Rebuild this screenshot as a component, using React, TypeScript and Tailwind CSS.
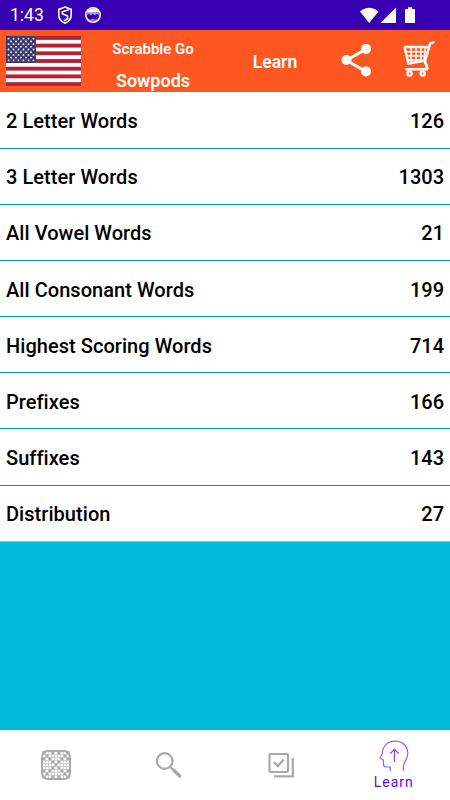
interface WordList {
  label: string;
  count: number;
}

const WORD_LISTS: WordList[] = [
  { label: '2 Letter Words', count: 126 },
  { label: '3 Letter Words', count: 1303 },
  { label: 'All Vowel Words', count: 21 },
  { label: 'All Consonant Words', count: 199 },
  { label: 'Highest Scoring Words', count: 714 },
  { label: 'Prefixes', count: 166 },
  { label: 'Suffixes', count: 143 },
  { label: 'Distribution', count: 27 },
];

const BOARD = [
  '#..#.#..#',
  '.#.....#.',
  '#.#...#.#',
  '...#.#...',
  '....#....',
  '...#.#...',
  '#.#...#.#',
  '.#.....#.',
  '#..#.#..#',
];

function StatusBar() {
  return (
    <div className="flex h-[30px] shrink-0 items-center bg-[#3700b3] text-white">
      <span className="ml-[10px] w-[47px] pt-[2px] text-[17.5px] leading-none">1:43</span>
      <svg className="h-[20px] w-[16px]" viewBox="0 0 16 20" fill="none" stroke="currentColor" strokeWidth="1.6">
        <path d="M8 2L14.2 4.4V10C14.2 13.8 11.6 16.8 8 18.2C4.4 16.8 1.8 13.8 1.8 10V4.4Z" />
        <path d="M11.8 4.8L5.3 6.8V8.8L10.6 11V13.5L7 16" />
      </svg>
      <svg className="ml-[11px] h-[18px] w-[18px]" viewBox="0 0 18 18">
        <circle cx="9" cy="9" r="7.2" fill="none" stroke="currentColor" strokeWidth="1.6" />
        <path d="M3 6.2Q4.5 2.4 9 2.4T15 6.2Z" fill="currentColor" />
        <path d="M3.2 6V9L5 7.8L6.6 9.4L8.8 8L11.2 9.4L13 7.8L14.8 9V6Z" fill="currentColor" opacity="0.55" />
        <path d="M4 12.2L6 13.4L9 12.6L12 13.4L14 12.2L12 15H6Z" fill="currentColor" opacity="0.45" />
      </svg>
      <svg className="ml-auto h-[18px] w-[60px]" viewBox="0 0 60 18" fill="currentColor">
        <path d="M1 5.5Q10 -2 19.5 5.5L10.2 17Z" />
        <path d="M21.5 17L37 1.5V17Z" />
        <path d="M49 1.3H53V3H56V17H46V3H49Z" />
      </svg>
      <span className="w-[31px]" />
    </div>
  );
}

function Flag() {
  return (
    <svg className="ml-[6px] h-[50px] w-[75px] shrink-0" viewBox="0 0 75 50">
      <rect width="75" height="50" fill="#fff" />
      {Array.from({ length: 7 }, (_, i) => (
        <rect key={i} y={(i * 100) / 13} width="75" height={50 / 13} fill="#b22234" />
      ))}
      <rect width="30" height="26.92" fill="#3c3b6e" />
      {Array.from({ length: 9 }, (_, row) =>
        Array.from({ length: row % 2 ? 5 : 6 }, (_, col) => (
          <circle
            key={`${row}-${col}`}
            cx={2.5 + col * 5 + (row % 2 ? 2.5 : 0)}
            cy={2.7 + row * 2.7}
            r="0.9"
            fill="#fff"
          />
        )),
      )}
    </svg>
  );
}

function Header() {
  return (
    <header className="flex h-[62px] shrink-0 items-center bg-[#ff5722] font-semibold text-white">
      <Flag />
      <div className="ml-[6px] flex w-[132px] flex-col items-center pt-[8px]">
        <span className="text-[15px] leading-[32px]">Scrabble Go</span>
        <span className="text-[18px] leading-[32px]">Sowpods</span>
      </div>
      <span className="w-[112px] pt-[2px] text-center text-[17.5px]">Learn</span>
      <svg className="ml-[10px] h-[34px] w-[30px]" viewBox="0 0 30 34" fill="currentColor">
        <path d="M25 5L5.5 16.5L25 27.5" fill="none" stroke="currentColor" strokeWidth="2.8" />
        <circle cx="5.5" cy="16" r="5" />
        <circle cx="25" cy="4.9" r="5" />
        <circle cx="25" cy="27.4" r="5" />
      </svg>
      <svg className="mb-[4px] ml-[32px] h-[38px] w-[32px]" viewBox="0 0 32 38" fill="none" stroke="currentColor">
        <path d="M30.5 2.3L27.2 3.5L22 21.5L23.5 27" strokeWidth="2.4" strokeLinecap="round" />
        <path d="M1.2 7H26M1.5 7L5.5 23.5L22.5 20.5" strokeWidth="2.4" />
        <path d="M2.5 11.7H25M3.5 15.9H24M4.5 20H22.5M8 7V22.5M13 7V22M18 7V21M22.5 7L21 20" strokeWidth="1.6" />
        <path d="M21.5 21.5Q25 26 24 29.2H2.5" strokeWidth="2.6" />
        <circle cx="6.5" cy="33.5" r="2.1" strokeWidth="2.2" />
        <circle cx="19.7" cy="33.5" r="2.1" strokeWidth="2.2" />
      </svg>
    </header>
  );
}

function BoardIcon() {
  return (
    <svg className="h-[30px] w-[30px]" viewBox="0 0 30 30">
      <rect x="1" y="1" width="28" height="28" rx="6" fill="#fff" />
      {BOARD.map((line, row) =>
        [...line].map((cell, col) => (
          <rect
            key={`${row}-${col}`}
            x={1.5 + col * 3}
            y={1.5 + row * 3}
            width="3"
            height="3"
            fill={cell === '#' ? '#a9a9a9' : '#fff'}
            stroke="#c4c4c4"
            strokeWidth="0.6"
          />
        )),
      )}
      <rect x="1" y="1" width="28" height="28" rx="6" fill="none" stroke="#a9a9a9" strokeWidth="2" />
    </svg>
  );
}

function BottomNav() {
  return (
    <nav className="grid h-[70px] shrink-0 grid-cols-4 items-center justify-items-center bg-white text-[#a9a9a9]">
      <BoardIcon />
      <svg className="h-[30px] w-[30px]" viewBox="0 0 30 30" fill="none" stroke="currentColor">
        <circle cx="10.7" cy="11" r="7.8" strokeWidth="2.2" />
        <path d="M16.2 17L18.5 19.3" strokeWidth="2" />
        <path d="M19.2 19.7L25.8 26" strokeWidth="3.4" strokeLinecap="round" />
      </svg>
      <svg className="h-[30px] w-[30px]" viewBox="0 0 30 30" fill="none" stroke="currentColor" strokeWidth="2.2">
        <rect x="3.5" y="4" width="18.5" height="18" rx="1" />
        <path d="M7.8 12L11.8 16L17.8 9.5" strokeWidth="2.4" />
        <path d="M26.8 8V26.3H8" />
      </svg>
      <div className="flex flex-col items-center pt-[2px] text-[#5a0ee0]">
        <svg className="h-[32px] w-[32px]" viewBox="0 0 32 32" fill="none" stroke="#9b5cf0" strokeWidth="1.2">
          <path d="M12.2 31V27H8Q5.4 27 5.4 24V20L2 18Q1.7 17.5 4.2 14C4.5 6 9.5 1.2 17 1.2C25 1.2 30 6.5 29.8 13.5C29.7 19 25.3 22.5 25.3 27V31" />
          <path d="M16.5 22V10M12.3 13.5L16.5 9.3L20.7 13.5" stroke="#8545ee" />
        </svg>
        <span className="text-[14px] leading-[20px] tracking-[1px]">Learn</span>
      </div>
    </nav>
  );
}

export default function App() {
  return (
    <div className="flex h-[800px] w-[450px] flex-col overflow-hidden bg-[#00bcd8] font-['Roboto',sans-serif]">
      <StatusBar />
      <Header />
      <ul className="shrink-0 bg-white pt-[0.6px]">
        {WORD_LISTS.map(({ label, count }) => (
          <li
            key={label}
            className="flex h-[56.15px] items-center justify-between border-b border-[#0097b2] bg-white px-[6px] pt-[2px] text-[20px] font-medium text-black last:border-[#8cc5ce]"
          >
            <span className="tracking-[0.05px]">{label}</span>
            <span>{count}</span>
          </li>
        ))}
      </ul>
      <div className="flex-1" />
      <BottomNav />
    </div>
  );
}
